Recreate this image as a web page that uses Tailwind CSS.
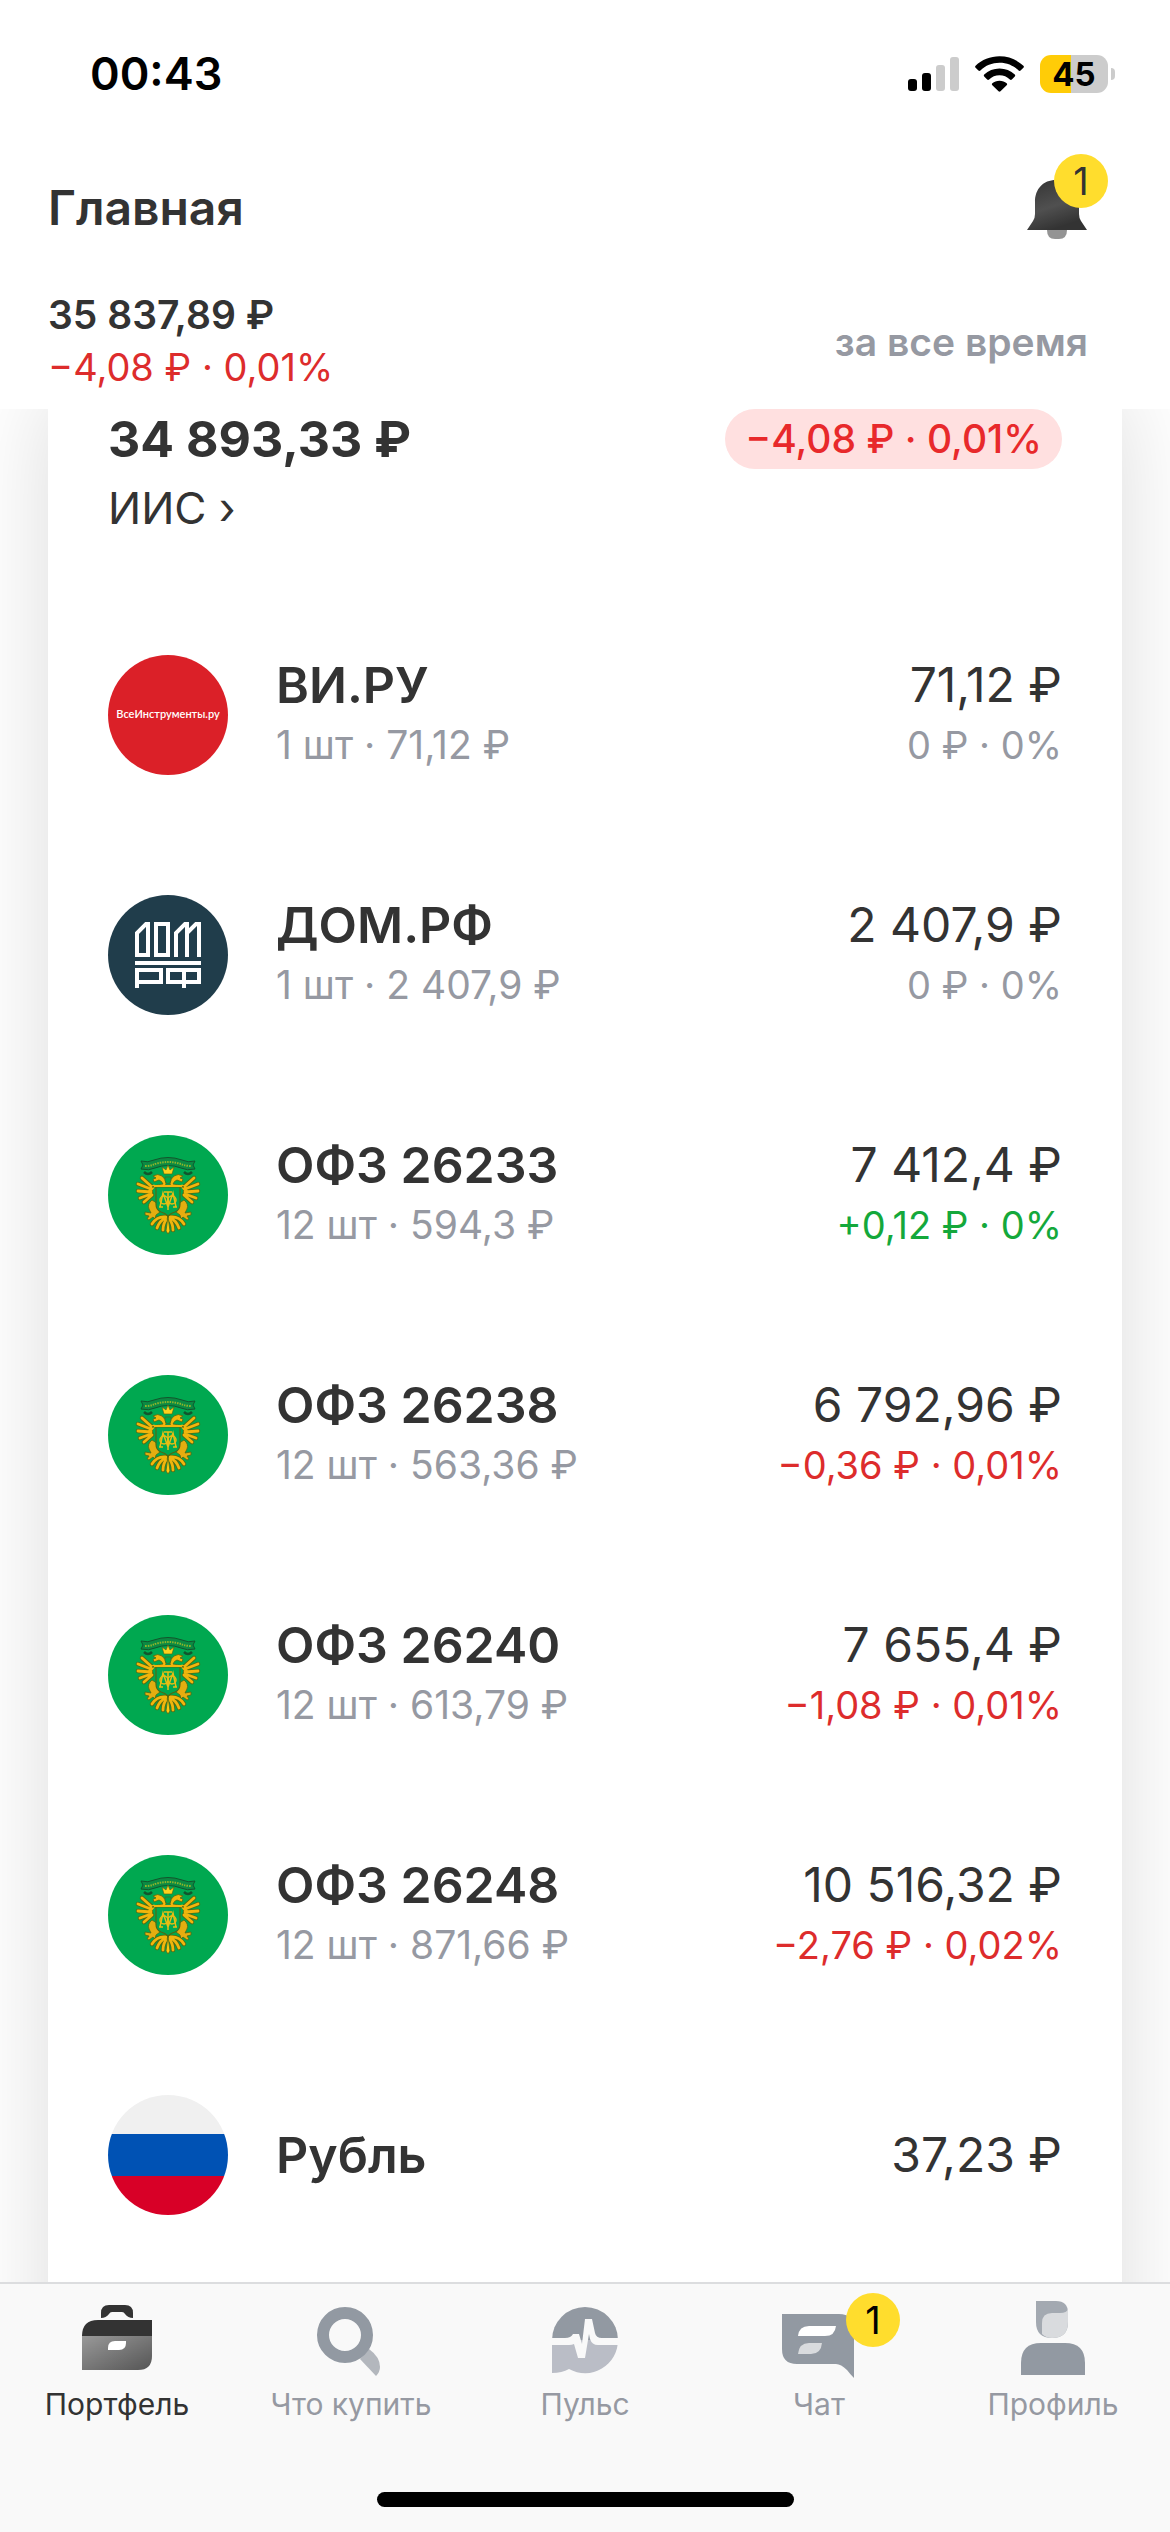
<!doctype html>
<html lang="ru">
  <head>
    <meta charset="UTF-8" />
    <meta name="viewport" content="width=device-width, initial-scale=1.0" />
    <title>Главная</title>
    <script src="https://cdn.jsdelivr.net/npm/@tailwindcss/browser@4"></script>
  </head>

  <body class="flex h-screen flex-col overflow-hidden bg-white font-['Inter','Liberation_Sans',sans-serif] text-[#333]">
    <!-- Shared artwork -->
    <svg class="hidden">
      <symbol id="coat" viewBox="0 0 120 120">
        <circle cx="60" cy="60" r="60" fill="#00a850" />
        <!-- ribbon -->
        <path d="M33 26q7 2 13-1 14-5 28 0 6 3 13 1l-2 4 2 4q-8 2-14-1-13-5-26 0-6 3-14 1l2-4z" fill="#0b8a43" stroke="#12552c" stroke-width="1" />
        <path d="M37 31q6 0 10-2 13-4 26 0 4 2 10 2" fill="none" stroke="#8fb52b" stroke-width="2" stroke-dasharray="1.500 1" />
        <path d="M36 37q4 4 8 0m40 0q-4 4-8 0" fill="none" stroke="#12552c" stroke-width="2.500" />
        <g id="coat-half">
          <!-- wing feathers -->
          <g fill="none" stroke-linecap="round">
            <path d="M44 52l-10-9M43 54l-13-5M43 57l-13-1M43 59l-11 4M44 60l-8 7" stroke="#4f6a14" stroke-width="4.500" />
            <path d="M44 52l-10-9M43 54l-13-5M43 57l-13-1M43 59l-11 4M44 60l-8 7M46 51l-5 6" stroke="#f2b50c" stroke-width="2.800" />
          </g>
          <!-- neck and head -->
          <path d="M44 52q7-3 11-3-1-3-4-4l-5 2-1-3 3-1-3-2q5-3 9 0 4 3 4 8l-2 4z" fill="#f2b50c" stroke="#4f6a14" stroke-width=".8" />
          <!-- leg and claw -->
          <path d="M44 65q-5 4-3 9l2 4-6-1 0 3 4 1-2 3 2 1 4-3 2 2 1-4 4-3q0-8-8-12z" fill="#e5ad10" stroke="#4f6a14" stroke-width=".8" />
          <!-- tail -->
          <g fill="none" stroke-linecap="round">
            <path d="M58 82q-9-1-14 7M58 83q-6 2-9 10M59 84q-4 4-4 11" stroke="#4f6a14" stroke-width="4.500" />
            <path d="M58 82q-9-1-14 7M58 83q-6 2-9 10M59 84q-4 4-4 11" stroke="#f2b50c" stroke-width="2.800" />
          </g>
        </g>
        <use href="#coat-half" transform="matrix(-1 0 0 1 120 0)" />
        <path d="M60 81l-2 15 2 3 2-3z" fill="#ffc90e" stroke="#4f6a14" stroke-width=".8" />
        <path d="M56 39l-2-7 4 3 2-5 2 5 4-3-2 7z" fill="#ffd21c" stroke="#5b5a10" stroke-width=".6" />
        <path d="M57 42h6v3q0 3-3 4-3-1-3-4z" fill="#00a850" stroke="#5b5a10" stroke-width=".6" />
        <path d="M48 52h24v17q0 6-5 8-4 1-7 4-3-3-7-4-5-2-5-8z" fill="#00a850" stroke="#4f6a14" stroke-width="1.200" />
        <path d="M46 51h28" stroke="#f2b50c" stroke-width="2" />
        <g fill="none" stroke="#e8bd14" stroke-width="1.500">
          <path d="M60 57v18M56 57h8M52 72l3-14 5 14 5-14 3 14M51 72h4m10 0h4" />
          <circle cx="56" cy="65" r="4" />
          <circle cx="64" cy="65" r="4" />
        </g>
      </symbol>
    </svg>

    <header class="relative z-10 shrink-0 bg-white">
      <!-- Status bar -->
      <div class="flex items-center justify-between pt-10 pr-[55px] pl-[90px]">
        <time class="text-[45px] leading-[68px] font-semibold text-black">00:43</time>
        <div class="flex items-center gap-4">
          <svg class="h-[34px] w-[51px]" viewBox="0 0 51 34" aria-label="Сигнал">
            <rect x="0" y="22" width="9" height="12" rx="3" fill="#000" />
            <rect x="14" y="16" width="9" height="18" rx="3" fill="#000" />
            <rect x="28" y="8" width="9" height="26" rx="3" fill="#ccc" />
            <rect x="42" y="0" width="9" height="34" rx="3" fill="#ccc" />
          </svg>
          <svg class="h-9 w-[49px]" viewBox="0 0 50 36" aria-label="Wi-Fi">
            <path d="M25 0C15.600 0 7 3.600 .6 9.500q-1 1 0 2L3.500 14.400q1 1 2 0C10.600 9.500 17.400 6.600 25 6.600s14.400 2.900 19.500 7.800q1 1 2 0l2.900-2.900q1-1 0-2C43 3.600 34.400 0 25 0z" />
            <path d="M25 12.500c-6 0-11.500 2.300-15.600 6q-1 1 0 2l3 3q1 1 2 0c2.800-2.600 6.500-4.200 10.600-4.200s7.800 1.600 10.600 4.200q1 1 2 0l3-3q1-1 0-2c-4.100-3.700-9.600-6-15.600-6z" />
            <path d="M25 25c-3 0-5.400 1-7.300 2.500q-1 1 0 2l6.300 6q1 1 2 0l6.300-6q1-1 0-2C30.400 26 28 25 25 25z" />
          </svg>
          <div class="flex items-center gap-[3px]">
            <div class="flex h-[38px] w-[68px] items-center justify-center rounded-[11px] bg-linear-to-r from-[#ffcc07] from-45% to-[#ccc] to-45% text-[33px] leading-[38px] font-bold text-black">45</div>
            <div class="h-3 w-1 rounded-r-full bg-[#ccc]"></div>
          </div>
        </div>
      </div>

      <div class="flex items-start justify-between pt-[46px] pr-[62px] pl-12">
        <h1 class="text-[48px] leading-[108px] font-semibold">Главная</h1>
        <button type="button" class="relative h-[86px] w-[82px]" aria-label="Уведомления, 1 новое">
          <svg class="h-[86px] w-[82px]" viewBox="0 0 82 86">
            <defs>
              <linearGradient id="bell" x1="0" y1="0" x2=".4" y2="1">
                <stop offset="0" stop-color="#333" />
                <stop offset=".6" stop-color="#505050" />
                <stop offset="1" stop-color="#333" />
              </linearGradient>
            </defs>
            <path d="M21 76h20q0 9-8 9h-4q-8 0-8-9z" fill="#949494" />
            <path d="M30 26c14 0 23 9 23 22v12q0 4 2 7l6 9H1l6-9q2-3 2-7V48c0-13 8-22 21-22z" fill="url(#bell)" />
          </svg>
          <span class="absolute top-0 right-0 flex size-[54px] items-center justify-center rounded-full bg-[#ffdd2d] text-[38px] leading-none">1</span>
        </button>
      </div>

      <div class="flex items-center justify-between pt-[26px] pr-[82px] pb-[15px] pl-12">
        <div class="leading-[53px]">
          <p class="text-[39px] font-semibold">35 837,89 ₽</p>
          <p class="text-[38px] text-[#dd2c2c]">−4,08 ₽ · 0,01%</p>
        </div>
        <button type="button" class="text-[39px] leading-[53px] font-semibold text-[#9699a2]">за все время</button>
      </div>
    </header>

    <main class="min-h-0 flex-1 overflow-hidden px-12">
      <section class="-mt-12 bg-white px-[60px] pt-12 pb-40 shadow-[0_30px_90px_rgba(0,0,0,0.14)]">
        <div class="flex items-start justify-between">
          <div>
            <h2 class="text-[50px] leading-[60px] font-bold">34 893,33 ₽</h2>
            <a href="#" class="block text-[44px] leading-[78px]">ИИС ›</a>
          </div>
          <p class="rounded-full bg-[#ffe0e0] px-5 text-[39px] leading-[60px] font-medium text-[#e8292b]">−4,08 ₽ · 0,01%</p>
        </div>

        <ul class="pt-12">
          <li class="flex h-60 items-center gap-12">
            <svg class="size-[120px] shrink-0" viewBox="0 0 120 120">
              <circle cx="60" cy="60" r="60" fill="#db2028" />
              <text x="60" y="63" text-anchor="middle" font-size="11" font-weight="600" fill="#fff" class="font-['Lato',sans-serif]">ВсеИнструменты.ру</text>
            </svg>
            <div class="flex-1">
              <h3 class="text-[50px] leading-[60px] font-semibold">ВИ.РУ</h3>
              <p class="text-[39px] leading-[60px] text-[#9699a2]">1 шт · 71,12 ₽</p>
            </div>
            <div class="text-right">
              <p class="text-[48px] leading-[60px]">71,12 ₽</p>
              <p class="text-[38px] leading-[60px] text-[#9699a2]">0 ₽ · 0%</p>
            </div>
          </li>
          <li class="flex h-60 items-center gap-12">
            <svg class="size-[120px] shrink-0" viewBox="0 0 120 120">
              <circle cx="60" cy="60" r="60" fill="#203d4b" />
              <g fill="none" stroke="#fff" stroke-width="4">
                <path d="M29 60V38l9-9h2v31zM48 29h12v31H48zM68 62V38l9-9h2v33M79 38l9-9h3v33" />
                <path d="M27 68h66M29 93V75h24v12H29M60 75h31v12H60zM76 75v18" />
              </g>
            </svg>
            <div class="flex-1">
              <h3 class="text-[50px] leading-[60px] font-semibold">ДОМ.РФ</h3>
              <p class="text-[39px] leading-[60px] text-[#9699a2]">1 шт · 2 407,9 ₽</p>
            </div>
            <div class="text-right">
              <p class="text-[48px] leading-[60px]">2 407,9 ₽</p>
              <p class="text-[38px] leading-[60px] text-[#9699a2]">0 ₽ · 0%</p>
            </div>
          </li>
          <li class="flex h-60 items-center gap-12">
            <svg class="size-[120px] shrink-0"><use href="#coat" /></svg>
            <div class="flex-1">
              <h3 class="text-[50px] leading-[60px] font-semibold">ОФЗ 26233</h3>
              <p class="text-[39px] leading-[60px] text-[#9699a2]">12 шт · 594,3 ₽</p>
            </div>
            <div class="text-right">
              <p class="text-[48px] leading-[60px]">7 412,4 ₽</p>
              <p class="text-[38px] leading-[60px] text-[#14a83b]">+0,12 ₽ · 0%</p>
            </div>
          </li>
          <li class="flex h-60 items-center gap-12">
            <svg class="size-[120px] shrink-0"><use href="#coat" /></svg>
            <div class="flex-1">
              <h3 class="text-[50px] leading-[60px] font-semibold">ОФЗ 26238</h3>
              <p class="text-[39px] leading-[60px] text-[#9699a2]">12 шт · 563,36 ₽</p>
            </div>
            <div class="text-right">
              <p class="text-[48px] leading-[60px]">6 792,96 ₽</p>
              <p class="text-[38px] leading-[60px] text-[#dd2c2c]">−0,36 ₽ · 0,01%</p>
            </div>
          </li>
          <li class="flex h-60 items-center gap-12">
            <svg class="size-[120px] shrink-0"><use href="#coat" /></svg>
            <div class="flex-1">
              <h3 class="text-[50px] leading-[60px] font-semibold">ОФЗ 26240</h3>
              <p class="text-[39px] leading-[60px] text-[#9699a2]">12 шт · 613,79 ₽</p>
            </div>
            <div class="text-right">
              <p class="text-[48px] leading-[60px]">7 655,4 ₽</p>
              <p class="text-[38px] leading-[60px] text-[#dd2c2c]">−1,08 ₽ · 0,01%</p>
            </div>
          </li>
          <li class="flex h-60 items-center gap-12">
            <svg class="size-[120px] shrink-0"><use href="#coat" /></svg>
            <div class="flex-1">
              <h3 class="text-[50px] leading-[60px] font-semibold">ОФЗ 26248</h3>
              <p class="text-[39px] leading-[60px] text-[#9699a2]">12 шт · 871,66 ₽</p>
            </div>
            <div class="text-right">
              <p class="text-[48px] leading-[60px]">10 516,32 ₽</p>
              <p class="text-[38px] leading-[60px] text-[#dd2c2c]">−2,76 ₽ · 0,02%</p>
            </div>
          </li>
          <li class="flex h-60 items-center gap-12">
            <div class="flex size-[120px] shrink-0 flex-col overflow-hidden rounded-full">
              <div class="h-[39px] bg-[#f0f0f0]"></div>
              <div class="h-[42px] bg-[#0052b4]"></div>
              <div class="h-[39px] bg-[#d80027]"></div>
            </div>
            <h3 class="flex-1 text-[50px] leading-[60px] font-semibold">Рубль</h3>
            <p class="text-[48px] leading-[60px]">37,23 ₽</p>
          </li>
        </ul>
      </section>
    </main>

    <nav class="relative z-10 shrink-0 border-t-2 border-[#dcdddf] bg-[#f9f9f9] text-[30px] leading-[48px] text-[#9699a2]">
      <div class="grid grid-cols-5 pt-[13px]">
        <a href="#" class="flex flex-col items-center gap-[3px] text-[#333]" aria-current="page">
          <svg class="size-20" viewBox="0 0 80 80">
            <defs>
              <linearGradient id="case" x1="0" y1="0" x2="1" y2="1">
                <stop offset="0" stop-color="#999" />
                <stop offset="1" stop-color="#555" />
              </linearGradient>
            </defs>
            <path d="M24 21v-5q0-8 8-8h16q8 0 8 8v5q-5 0-8-4-1-2-3-2H35q-2 0-3 2-3 4-8 4z" fill="#333" />
            <path d="M5 39q0-16 16-16h54v16z" fill="#333" />
            <path d="M5 39h70v20q0 14-14 14H5z" fill="url(#case)" />
            <path d="M31 53v-2q0-7 7-7h11v2q0 7-7 7z" fill="#fff" />
          </svg>
          <span>Портфель</span>
        </a>
        <a href="#" class="flex flex-col items-center gap-[3px]">
          <svg class="size-20" viewBox="0 0 80 80">
            <path d="M58 52q11 8 11 18 0 5-4 9L49 62z" fill="#b3b7bd" />
            <circle cx="34" cy="38" r="22" fill="none" stroke="#9299a2" stroke-width="12" />
          </svg>
          <span>Что купить</span>
        </a>
        <a href="#" class="flex flex-col items-center gap-[3px]">
          <svg class="size-20" viewBox="0 0 80 80">
            <path d="M7 43a33 33 0 0 1 66 0z" fill="#9299a2" />
            <path d="M7 43h66a33 33 0 0 1-49 29q-7 4-17 4z" fill="#babdc6" />
            <path d="M6 41h14q6 0 8-4h6l3 10 3-25h7l3 14q1 5 7 5h17v7H53q-6 0-8-6l-1-5-4 24h-7l-4-14q-2 1-5 1H6z" fill="#f9f9f9" />
          </svg>
          <span>Пульс</span>
        </a>
        <a href="#" class="flex flex-col items-center gap-[3px]">
          <span class="relative size-20">
            <svg class="size-20 overflow-visible" viewBox="0 0 80 80">
              <path d="M3 17h57q15 0 15 15v49q-4-4-7-8-6-6-11-6H18Q3 67 3 52z" fill="#9299a2" />
              <path d="M19 39q1-10 11-10h27q-1 10-11 10z" fill="#fff" />
              <path d="M19 57q1-11 11-11h13q-1 11-11 11z" fill="#d9dbde" />
            </svg>
            <span class="absolute -top-1 left-[67px] flex size-[54px] items-center justify-center rounded-full bg-[#ffdd2d] text-[38px] leading-none text-black">1</span>
          </span>
          <span>Чат</span>
        </a>
        <a href="#" class="flex flex-col items-center gap-[3px]">
          <svg class="size-20" viewBox="0 0 80 80">
            <path d="M23 4h20q12 0 12 12v9q0 16-16 16T23 25z" fill="#a3a9b1" />
            <path d="M29 37V26q0-10 10-10h8q7 0 8-4v13q0 16-16 16-6 0-10-4z" fill="#d9dbde" />
            <path d="M8 78V66q0-20 20-20h24q20 0 20 20v12z" fill="#9299a2" />
          </svg>
          <span>Профиль</span>
        </a>
      </div>
      <div class="flex justify-center pt-16 pb-[25px]">
        <div class="h-[15px] w-[417px] rounded-full bg-black"></div>
      </div>
    </nav>
  </body>
</html>
